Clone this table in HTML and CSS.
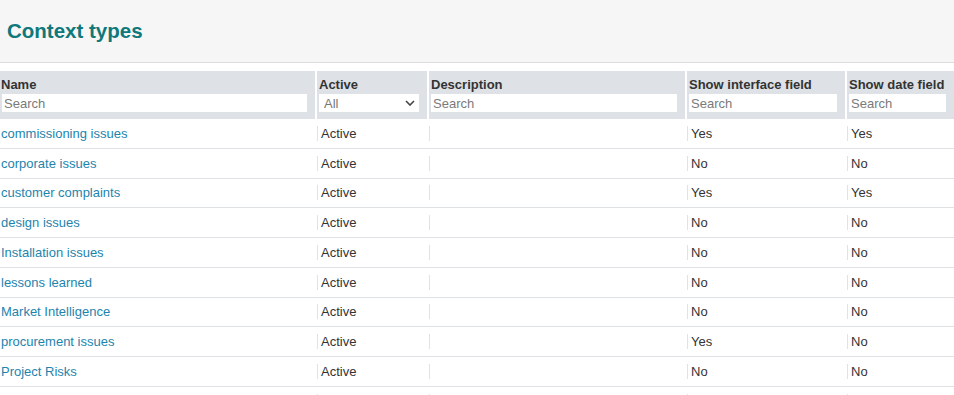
FILE: index.html
```html
<!DOCTYPE html>
<html lang="en">
<head>
<meta charset="utf-8">
<title>Context types</title>
<link rel="stylesheet" href="styles.css">
</head>
<body>
<header class="page-head">
  <h1 class="title">Context types</h1>
</header>
<main class="content">
  <table class="grid">
    <colgroup>
      <col class="c-name"><col class="c-active"><col class="c-desc"><col class="c-iface"><col class="c-date">
    </colgroup>
    <thead>
      <tr>
        <th class="first"><div class="lbl">Name</div><input class="search" type="text" placeholder="Search"></th>
        <th><div class="lbl">Active</div>
          <div class="select-wrap">
            <select class="select"><option>All</option></select>
            <svg class="chev" width="10" height="6" viewBox="0 0 10 6"><path d="M1 1l4 4 4-4" fill="none" stroke="#444" stroke-width="1.6"/></svg>
          </div>
        </th>
        <th><div class="lbl">Description</div><input class="search" type="text" placeholder="Search"></th>
        <th><div class="lbl">Show interface field</div><input class="search" type="text" placeholder="Search"></th>
        <th><div class="lbl">Show date field</div><input class="search" type="text" placeholder="Search"></th>
      </tr>
    </thead>
    <tbody>
      <tr><td class="first"><a href="#">commissioning issues</a></td><td><span class="v">Active</span></td><td><span class="v"></span></td><td><span class="v">Yes</span></td><td><span class="v">Yes</span></td></tr>
      <tr><td class="first"><a href="#">corporate issues</a></td><td><span class="v">Active</span></td><td><span class="v"></span></td><td><span class="v">No</span></td><td><span class="v">No</span></td></tr>
      <tr><td class="first"><a href="#">customer complaints</a></td><td><span class="v">Active</span></td><td><span class="v"></span></td><td><span class="v">Yes</span></td><td><span class="v">Yes</span></td></tr>
      <tr><td class="first"><a href="#">design issues</a></td><td><span class="v">Active</span></td><td><span class="v"></span></td><td><span class="v">No</span></td><td><span class="v">No</span></td></tr>
      <tr><td class="first"><a href="#">Installation issues</a></td><td><span class="v">Active</span></td><td><span class="v"></span></td><td><span class="v">No</span></td><td><span class="v">No</span></td></tr>
      <tr><td class="first"><a href="#">lessons learned</a></td><td><span class="v">Active</span></td><td><span class="v"></span></td><td><span class="v">No</span></td><td><span class="v">No</span></td></tr>
      <tr><td class="first"><a href="#">Market Intelligence</a></td><td><span class="v">Active</span></td><td><span class="v"></span></td><td><span class="v">No</span></td><td><span class="v">No</span></td></tr>
      <tr><td class="first"><a href="#">procurement issues</a></td><td><span class="v">Active</span></td><td><span class="v"></span></td><td><span class="v">Yes</span></td><td><span class="v">No</span></td></tr>
      <tr><td class="first"><a href="#">Project Risks</a></td><td><span class="v">Active</span></td><td><span class="v"></span></td><td><span class="v">No</span></td><td><span class="v">No</span></td></tr>
      <tr class="partial"><td class="first"></td><td><span class="v"></span></td><td><span class="v"></span></td><td><span class="v"></span></td><td><span class="v"></span></td></tr>
    </tbody>
  </table>
</main>
</body>
</html>
```
FILE: styles.css
```css
html, body {
  margin: 0;
  padding: 0;
  background: #fff;
  overflow: hidden;
}
body {
  font-family: "Liberation Sans", Arial, sans-serif;
  font-size: 13px;
  color: #333;
}
.page-head {
  height: 62px;
  background: #f6f6f6;
  border-bottom: 1px solid #dcdcdc;
  display: flex;
  align-items: center;
  padding-left: 7px;
}
.title {
  margin: 0;
  font-family: "Liberation Sans", Arial, sans-serif;
  font-size: 20.5px;
  font-weight: bold;
  color: #0e787a;
}
.content {
  padding-top: 8px;
}
.grid {
  width: 954px;
  table-layout: fixed;
  border-collapse: collapse;
  border-spacing: 0;
}
.c-name { width: 316px; }
.c-active { width: 112px; }
.c-desc { width: 258px; }
.c-iface { width: 160px; }
.c-date { width: 108px; }

.grid thead th {
  background: #dee2e6;
  text-align: left;
  vertical-align: top;
  padding: 6px 8px 7px 2px;
  border-left: 2px solid #fff;
  font-weight: bold;
}
.grid thead th.first {
  border-left: 0;
  padding-left: 1px;
}
.lbl {
  line-height: 15px;
  height: 15px;
  white-space: nowrap;
  overflow: hidden;
  color: #333;
}
.search {
  display: block;
  box-sizing: border-box;
  width: 100%;
  height: 18px;
  margin-top: 2px;
  border: 0;
  padding: 0 2px;
  font-family: "Liberation Sans", Arial, sans-serif;
  font-size: 13px;
  background: #fff;
  color: #333;
  outline: none;
}
.grid thead th.first .search { margin-left: 1px; width: calc(100% - 1px); }
.search::placeholder { color: #7a7a7a; }
.select-wrap {
  position: relative;
  margin-top: 2px;
  height: 18px;
}
.select {
  appearance: none;
  -webkit-appearance: none;
  display: block;
  box-sizing: border-box;
  width: 100%;
  height: 18px;
  border: 0;
  padding: 0 5px;
  font-family: "Liberation Sans", Arial, sans-serif;
  font-size: 13px;
  color: #777;
  background: #fff;
  border-radius: 0;
  outline: none;
}
.chev {
  position: absolute;
  right: 4px;
  top: 6px;
  pointer-events: none;
}
.grid tbody td {
  height: 28.75px;
  padding: 0;
  border-bottom: 1px solid #dfe2e5;
  vertical-align: middle;
  white-space: nowrap;
  overflow: hidden;
}
.grid tbody td.first {
  padding-left: 1px;
}
.grid tbody td .v {
  display: block;
  border-left: 1px solid #e2e2e2;
  height: 15px;
  line-height: 15px;
  padding-left: 3px;
  margin-left: 1px;
}
.grid tbody td a {
  color: #1d84ad;
  text-decoration: none;
}
```
